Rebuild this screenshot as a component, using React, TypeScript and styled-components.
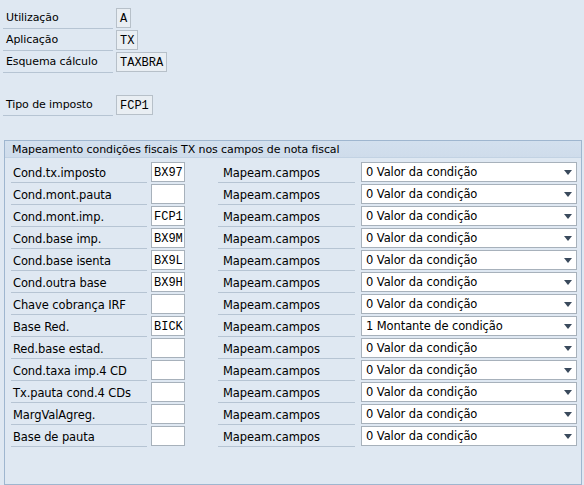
import React from "react";
import styled, { createGlobalStyle } from "styled-components";

const GlobalStyle = createGlobalStyle`
	html, body {
		margin: 0;
		padding: 0;
		background: #dfe8f2;
	}
	body {
		font-family: "DejaVu Sans", sans-serif;
		font-size: 11px;
		letter-spacing: -0.1px;
		color: #000;
	}
`;

const headerFields = [
	{ label: "Utilização", value: "A" },
	{ label: "Aplicação", value: "TX" },
	{ label: "Esquema cálculo", value: "TAXBRA" },
];

const mappingRows = [
	{ label: "Cond.tx.imposto", value: "BX97", option: "0 Valor da condição" },
	{ label: "Cond.mont.pauta", value: "", option: "0 Valor da condição" },
	{ label: "Cond.mont.imp.", value: "FCP1", option: "0 Valor da condição" },
	{ label: "Cond.base imp.", value: "BX9M", option: "0 Valor da condição" },
	{ label: "Cond.base isenta", value: "BX9L", option: "0 Valor da condição" },
	{ label: "Cond.outra base", value: "BX9H", option: "0 Valor da condição" },
	{ label: "Chave cobrança IRF", value: "", option: "0 Valor da condição" },
	{ label: "Base Red.", value: "BICK", option: "1 Montante de condição" },
	{ label: "Red.base estad.", value: "", option: "0 Valor da condição" },
	{ label: "Cond.taxa imp.4 CD", value: "", option: "0 Valor da condição" },
	{ label: "Tx.pauta cond.4 CDs", value: "", option: "0 Valor da condição" },
	{ label: "MargValAgreg.", value: "", option: "0 Valor da condição" },
	{ label: "Base de pauta", value: "", option: "0 Valor da condição" },
];

const App = () => {
	return (
		<>
			<GlobalStyle />
			<Screen>
				<HeaderBlock>
					{headerFields.map((f) => (
						<FieldRow key={f.label}>
							<Label>{f.label}</Label>
							<DisplayField>{f.value}</DisplayField>
						</FieldRow>
					))}
					<Gap />
					<FieldRow>
						<Label>Tipo de imposto</Label>
						<DisplayField>FCP1</DisplayField>
					</FieldRow>
				</HeaderBlock>
				<GroupBox>
					<GroupTitle>Mapeamento condições fiscais TX nos campos de nota fiscal</GroupTitle>
					<GroupBody>
						{mappingRows.map((row) => (
							<MapRow key={row.label}>
								<CondLabel>{row.label}</CondLabel>
								<InputField>{row.value}</InputField>
								<MapLabel>Mapeam.campos</MapLabel>
								<Dropdown>
									<span>{row.option}</span>
									<Arrow />
								</Dropdown>
							</MapRow>
						))}
					</GroupBody>
				</GroupBox>
			</Screen>
		</>
	);
};

const Screen = styled.div`
	width: 584px;
	height: 485px;
	overflow: hidden;
	box-sizing: border-box;
	padding: 8px 2px 0 4px;
`;

const HeaderBlock = styled.div`
	display: flex;
	flex-direction: column;
	margin-left: -1px;
`;

const FieldRow = styled.div`
	display: flex;
	align-items: flex-start;
	height: 22px;
`;

const Gap = styled.div`
	height: 21px;
`;

const Label = styled.div`
	width: 110px;
	height: 21px;
	box-sizing: border-box;
	padding: 3px 0 0 3px;
	border-bottom: 1px solid #b6c4d3;
	margin-right: 3px;
	white-space: nowrap;
`;

const DisplayField = styled.div`
	height: 20px;
	box-sizing: border-box;
	padding: 3px 3px 0 3px;
	background: #e9eef3;
	border: 1px solid #b7c0c9;
	font-family: "Courier New", "Liberation Mono", monospace;
	font-size: 12px;
	line-height: 14px;
	letter-spacing: 0;
`;

const GroupBox = styled.div`
	margin-top: 23px;
	height: 345px;
	border: 1px solid #9fb6cf;
	box-sizing: border-box;
	display: flex;
	flex-direction: column;
`;

const GroupTitle = styled.div`
	height: 17px;
	box-sizing: border-box;
	padding: 2px 0 0 7px;
	background: linear-gradient(#d3e0ee, #cfdceb);
	border-bottom: 1px solid #c2d2e3;
	white-space: nowrap;
`;

const GroupBody = styled.div`
	padding: 4px 0 0 6px;
	display: flex;
	flex-direction: column;
	font-size: 11.5px;
`;

const MapRow = styled.div`
	display: flex;
	align-items: flex-start;
	height: 22px;
`;

const CondLabel = styled.div`
	width: 136px;
	height: 21px;
	box-sizing: border-box;
	padding: 4px 0 0 2px;
	border-bottom: 1px solid #b6c4d3;
	white-space: nowrap;
`;

const InputField = styled.div`
	height: 20px;
	width: 34px;
	margin-left: 4px;
	box-sizing: border-box;
	padding: 3px 0 0 2px;
	background: #fff;
	border: 1px solid #a7b1bb;
	font-family: "Courier New", "Liberation Mono", monospace;
	font-size: 12px;
	line-height: 14px;
	letter-spacing: 0;
`;

const MapLabel = styled.div`
	width: 137px;
	height: 21px;
	margin-left: 33px;
	box-sizing: border-box;
	padding: 4px 0 0 5px;
	border-bottom: 1px solid #b6c4d3;
	white-space: nowrap;
`;

const Dropdown = styled.div`
	width: 216px;
	height: 20px;
	margin-left: 6px;
	box-sizing: border-box;
	padding: 0 0 0 4px;
	background: #fff;
	border: 1px solid #a7b1bb;
	display: flex;
	align-items: center;
	justify-content: space-between;
	white-space: nowrap;
`;

const Arrow = styled.span`
	width: 0;
	height: 0;
	margin-right: 4px;
	border-left: 4px solid transparent;
	border-right: 4px solid transparent;
	border-top: 5px solid #3a4a5c;
`;

export default App;
